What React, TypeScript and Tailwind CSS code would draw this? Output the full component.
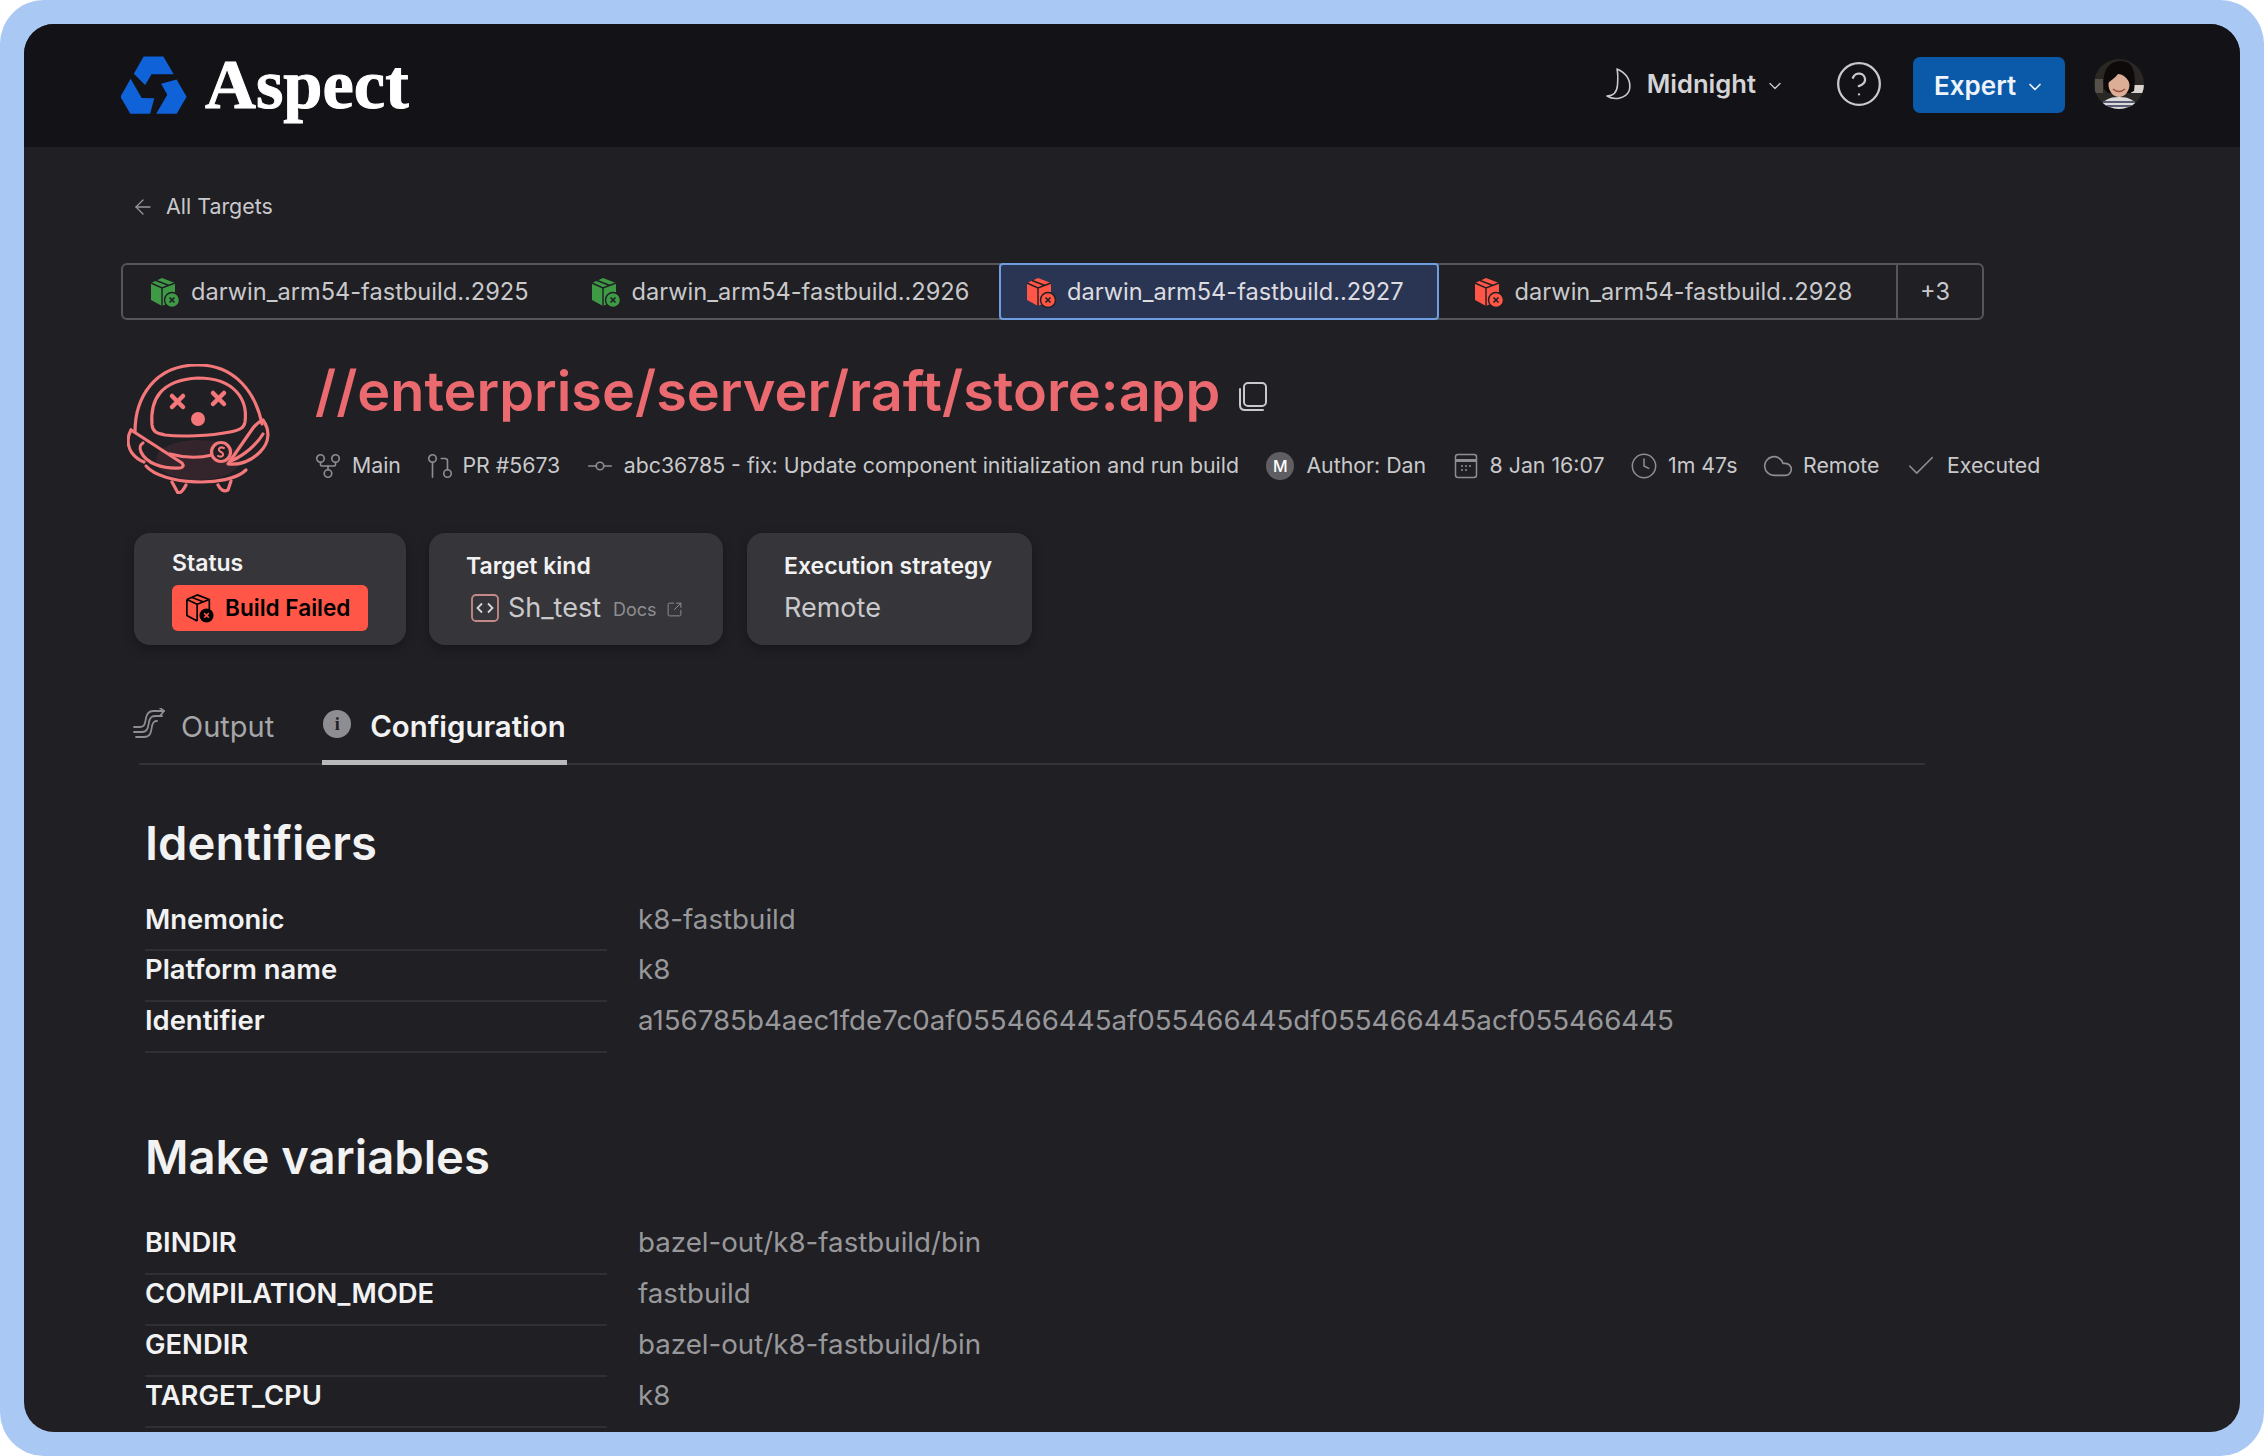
import { ArrowLeft, Check, ChevronDown, CircleHelp, Clock, Cloud, GitCommitHorizontal, GitFork, GitPullRequest, SquareArrowOutUpRight } from 'lucide-react';
import type { ReactNode } from 'react';

function Logo() {
  const piece = '23,0 43,0 53.5,18 31,18 24.5,29 13,17.5';
  return (
    <svg width="66" height="59" viewBox="0 0 67 59" fill="#0f62d8">
      <polygon points={piece} />
      <polygon points={piece} transform="rotate(120 33 33)" />
      <polygon points={piece} transform="rotate(240 33 33)" />
    </svg>
  );
}

function Moon() {
  return (
    <svg width="28" height="34" viewBox="0 0 28 34" fill="none" stroke="#c9c9cb" strokeWidth="1.6" strokeLinejoin="round">
      <path d="M12 2 C22 6 27 15 24 24 C21 31 10 34 2 29 C8 29 12 25 12.5 18 C13 11 13 6 12 2Z" />
    </svg>
  );
}

function Avatar() {
  return (
    <svg width="50" height="50" viewBox="0 0 50 50" className="rounded-full">
      <rect width="50" height="50" fill="#2a2724" />
      <rect x="37" y="26" width="13" height="8" fill="#d9d4ce" />
      <rect x="1" y="20" width="8" height="14" fill="#56504a" />
      <path d="M10 30 C7 8 18 2 27 2 C37 2 43 10 40 32 L36 34 H14Z" fill="#0d0a09" />
      <ellipse cx="25" cy="25" rx="10.5" ry="13" fill="#dcae95" />
      <path d="M14 24 C14 12 24 9 32 11 C37 14 37 20 36 26 C34 19 29 15 24 15 C21 19 17 21 14 24Z" fill="#0d0a09" />
      <path d="M19 30 Q25 35 31 30" stroke="#9a4f42" strokeWidth="1.6" fill="none" />
      <path d="M6 50 C8 41 15 38 25 38 C35 38 42 41 44 50Z" fill="#dcd9d9" />
      <path d="M9 43 H41 M7 47 H43" stroke="#565a74" strokeWidth="1.8" />
    </svg>
  );
}

function BoxIcon({ color }: { color: string }) {
  return (
    <svg width="31" height="32" viewBox="0 0 31 32" className="shrink-0">
      <polygon points="2,7 13,2 26,7 26,24 13,30 2,24" fill={color} />
      <path d="M2 7 L13 12 L26 7 M13 12 V30 M7 4.5 L20 9.5" stroke="#1f1f24" strokeWidth="1.4" fill="none" />
      <circle cx="23" cy="24" r="7.5" fill={color} stroke="#1f1f24" strokeWidth="1.4" />
      <path d="M20.5 21.5 L25.5 26.5 M25.5 21.5 L20.5 26.5" stroke="#1f1f24" strokeWidth="1.6" />
    </svg>
  );
}

function FailedBox() {
  return (
    <svg width="29" height="30" viewBox="0 0 31 32" className="shrink-0">
      <path d="M2 7 L13 2 L26 7 V18 M2 7 V24 L13 30 M2 7 L13 12 L26 7 M13 12 V30 M7 4.5 L20 9.5" stroke="#000" strokeWidth="1.8" fill="none" strokeLinejoin="round" />
      <circle cx="23" cy="24" r="7.5" fill="#000" />
      <path d="M20.5 21.5 L25.5 26.5 M25.5 21.5 L20.5 26.5" stroke="#ff5647" strokeWidth="1.6" />
    </svg>
  );
}

function Robot() {
  return (
    <svg width="143" height="130" viewBox="17 24 143 130" fill="none" stroke="#f4777a" strokeWidth="3.2" strokeLinecap="round" strokeLinejoin="round">
      <ellipse cx="88" cy="120" rx="42" ry="20" fill="#e8636b" fillOpacity="0.1" stroke="none" />
      <path d="M25 92 C25 58 44 25 88 25 C126 25 146 54 152 84" />
      <path d="M42 85 C40 60 50 40 88 38 C125 38 138 60 135 82 C134 88 130 90 120 92 C100 96 70 97 55 95 C46 93 43 92 42 85Z" />
      <path d="M62 56 L73 67 M73 56 L62 67 M103 53 L114 64 M114 53 L103 64" strokeWidth="4.5" />
      <circle cx="88" cy="79" r="7" fill="#f4777a" stroke="none" />
      <path d="M21 90 L72 123 Q75 127 70 128 C52 129 36 123 31 112 C29 107 30 105 33 103" />
      <path d="M21 90 C17 97 17 106 22 113 C25 117 29 120 34 122" />
      <path d="M153 80 C160 90 160 102 150 112 C140 122 128 125 118 124 L143 88 Q148 82 153 80Z" />
      <path d="M153 94 C147 104 135 115 121 121" />
      <path d="M36 126 C52 145 118 148 136 130" />
      <path d="M60 114 C75 118 90 118 102 115" />
      <circle cx="111" cy="112" r="9.5" fill="#1f1f24" />
      <path d="M114 108 C109 106 107 110 111 112 C115 114 113 118 108 116" strokeWidth="2" />
      <path d="M62 142 L68 153 Q72 153 76 145 M108 145 Q112 153 118 150 L121 141" />
    </svg>
  );
}

function OutputIcon() {
  return (
    <svg width="33" height="31" viewBox="0 0 33 31" fill="none" stroke="#8e8e92" strokeWidth="1.8" strokeLinecap="round" strokeLinejoin="round" className="mt-[7px]">
      <path d="M1 19 H7 C12 19 12 15 13 10 C14 5 16 3 20 3 H31" />
      <path d="M1 24 H9 C15 24 15 19 16 14 C17 9 19 8 23 8 H29" />
      <path d="M3 29 H11 C18 29 18 24 19 18 C20 14 21 13 24 13" />
      <path d="M27 0 L31 3 L27 8" />
    </svg>
  );
}

function CodeSquare() {
  return (
    <svg width="28" height="28" viewBox="0 0 28 28" fill="none" className="shrink-0">
      <rect x="1" y="1" width="26" height="26" rx="4" stroke="#c58a88" strokeWidth="1.8" />
      <path d="M11 9.5 L6.5 14 L11 18.5 M17 9.5 L21.5 14 L17 18.5" stroke="#d8d8da" strokeWidth="1.8" />
    </svg>
  );
}

function CopyIcon() {
  return (
    <svg width="30" height="31" viewBox="0 0 30 31" fill="none" stroke="#c9c9cb" strokeWidth="2" className="ml-[18px] mt-[10px]">
      <rect x="6" y="2" width="22" height="23" rx="4" />
      <path d="M2 8 V24 Q2 29 7 29 H25" strokeLinecap="round" />
    </svg>
  );
}

function CalendarIcon() {
  return (
    <svg width="24" height="26" viewBox="0 0 24 26" fill="none" stroke="#8e8e92" strokeWidth="1.5" className="shrink-0">
      <rect x="1.5" y="1.5" width="21" height="23" rx="2.5" />
      <path d="M1.5 7.5 H22.5" strokeWidth="3" />
      <path d="M7 13 H9 M11 13 H13 M15 13 H17 M7 17 H9 M11 17 H13" strokeWidth="1.6" />
    </svg>
  );
}

function TargetTab({ color, label, className }: { color: string; label: string; className: string }) {
  return (
    <div className={`flex items-center gap-[11px] ${className}`}>
      <BoxIcon color={color} />
      <span>{label}</span>
    </div>
  );
}

function Meta({ icon, label }: { icon: ReactNode; label: string }) {
  return (
    <div className="flex items-center gap-[12px]">
      {icon}
      <span>{label}</span>
    </div>
  );
}

function StatCard({ className, children }: { className: string; children: ReactNode }) {
  return <div className={`h-[112px] rounded-[16px] bg-[#36363a] shadow-[0_4px_12px_rgba(0,0,0,0.25)] ${className}`}>{children}</div>;
}

function Row({ label, value }: { label: string; value: string }) {
  return (
    <div className="flex h-[50.8px]">
      <div className="w-[462px] border-b-2 border-[#303034] text-[27.4px] leading-[36px] font-semibold text-[#f2f2f3]">{label}</div>
      <div className="pl-[31px] text-[27.7px] leading-[36px] text-[#98989b]">{value}</div>
    </div>
  );
}

const iconCls = 'text-[#8e8e92] shrink-0 -m-[3px]';

export default function App() {
  return (
    <div className="h-[1456px] w-[2264px] overflow-hidden bg-white font-['Inter',sans-serif]">
      <div className="h-full rounded-[44px] bg-[#a9c8f3] p-6">
        <div className="h-full overflow-hidden rounded-[30px] bg-[#1f1f24]">
          {/* Header */}
          <header className="flex h-[123px] items-center bg-[#131317] pl-[97px] pr-[96px]">
            <Logo />
            <span className="ml-[18px] -mt-[2px] font-['Liberation_Serif',serif] text-[70.5px] leading-none font-bold text-white [-webkit-text-stroke:1px_white]">Aspect</span>
            <div className="ml-auto -mt-[3px] flex items-center">
              <Moon />
              <span className="ml-[14px] text-[25.6px] font-semibold text-[#d4d4d6]">Midnight</span>
              <ChevronDown size={20} strokeWidth={1.6} className="ml-[9px] mt-[4px] text-[#c9c9cb]" />
              <CircleHelp size={50} strokeWidth={1.1} className="ml-[49px] -mt-[1px] text-[#c9c9cb]" />
              <button className="ml-[29px] mt-[2px] flex h-[56px] w-[152px] items-center rounded-[7px] bg-[#0b5aaa] pl-[21px] text-[26px] font-semibold text-[#eef3fa]">
                Expert
                <ChevronDown size={20} strokeWidth={2} className="ml-[9px] mt-[4px]" />
              </button>
              <div className="ml-[29px]">
                <Avatar />
              </div>
            </div>
          </header>

          <main className="pl-[97px]">
            <div className="mt-[44px] flex h-[30px] items-center pl-[10px] pt-[1px] text-[21.4px] text-[#c9c9cb]">
              <ArrowLeft size={24} strokeWidth={1.3} className="text-[#98989b]" />
              <span className="ml-[11px]">All Targets</span>
            </div>

            {/* Target tabs */}
            <div className="mt-[42px] flex h-[57px] w-[1863px] items-stretch rounded-[6px] border-2 border-[#55555a] text-[23.6px] text-[#c9c9cb]">
              <TargetTab color="#3f9a45" label="darwin_arm54-fastbuild..2925" className="w-[438px] pl-[26px]" />
              <TargetTab color="#3f9a45" label="darwin_arm54-fastbuild..2926" className="w-[439px] pl-[29px]" />
              <TargetTab color="#ff5647" label="darwin_arm54-fastbuild..2927" className="-my-[2px] w-[440px] rounded-[4px] border-2 border-[#6f9ee0] bg-[#2a3553] pl-[24px] text-[#dcdce0]" />
              <TargetTab color="#ff5647" label="darwin_arm54-fastbuild..2928" className="w-[458px] pl-[34px]" />
              <div className="flex w-[86px] items-center border-l-2 border-[#55555a] pl-[22px]">+3</div>
            </div>

            {/* Title */}
            <div className="mt-[44px] flex pl-[6px]">
              <Robot />
              <div className="ml-[45px]">
                <div className="-mt-[1px] flex h-[56px] items-center">
                  <h1 className="text-[55.8px] leading-none font-semibold text-[#ea6a70]">//enterprise/server/raft/store:app</h1>
                  <CopyIcon />
                </div>
                <div className="mt-[32px] flex h-[30px] items-center gap-[27.5px] pl-[1px] text-[21.3px] whitespace-nowrap text-[#c9c9cb]">
                  <Meta icon={<GitFork size={30} strokeWidth={1.3} className={iconCls} />} label="Main" />
                  <Meta icon={<GitPullRequest size={30} strokeWidth={1.3} className="-my-[3px] -ml-[3px] -mr-[5px] shrink-0 text-[#8e8e92]" />} label="PR #5673" />
                  <Meta icon={<GitCommitHorizontal size={30} strokeWidth={1.3} className={iconCls} />} label="abc36785 - fix: Update component initialization and run build" />
                  <Meta
                    icon={
                      <span className="flex h-[28px] w-[28px] items-center justify-center rounded-full bg-[#5f5f63] text-[16px] font-medium text-white">M</span>
                    }
                    label="Author: Dan"
                  />
                  <Meta icon={<CalendarIcon />} label="8 Jan 16:07" />
                  <Meta icon={<Clock size={28} strokeWidth={1.3} className="-m-[2px] shrink-0 text-[#8e8e92]" />} label="1m 47s" />
                  <Meta icon={<Cloud size={32} strokeWidth={1.2} className={iconCls} />} label="Remote" />
                  <Meta icon={<Check size={34} strokeWidth={1.1} className={iconCls} />} label="Executed" />
                </div>
              </div>
            </div>

            {/* Stat cards */}
            <div className="mt-[39px] flex pl-[13px]">
              <StatCard className="w-[272px] pl-[38px] pt-[15px]">
                <div className="text-[23px] leading-[30px] font-semibold text-[#f2f2f3]">Status</div>
                <div className="mt-[7px] flex h-[46px] w-[196px] items-center gap-[11px] rounded-[6px] bg-[#ff5647] pl-[13px] text-[22.6px] font-semibold text-black">
                  <FailedBox />
                  Build Failed
                </div>
              </StatCard>
              <StatCard className="ml-[23px] w-[294px] pl-[37px] pt-[18px]">
                <div className="text-[23px] leading-[30px] font-semibold text-[#f2f2f3]">Target kind</div>
                <div className="mt-[9px] flex items-center pl-[5px]">
                  <CodeSquare />
                  <span className="ml-[9px] text-[27px] leading-[36px] text-[#c9c9cb]">Sh_test</span>
                  <span className="ml-[12px] mt-[3px] text-[18px] text-[#8e8e92]">Docs</span>
                  <SquareArrowOutUpRight size={17} strokeWidth={1.4} className="ml-[9px] mt-[3px] text-[#8e8e92]" />
                </div>
              </StatCard>
              <StatCard className="ml-[24px] w-[285px] pl-[37px] pt-[18px]">
                <div className="text-[23px] leading-[30px] font-semibold text-[#f2f2f3]">Execution strategy</div>
                <div className="mt-[9px] text-[27px] leading-[36px] text-[#c9c9cb]">Remote</div>
              </StatCard>
            </div>

            {/* Page tabs */}
            <div className="relative mt-[56px] ml-[18px] flex h-[63.5px] w-[1786px] border-b-2 border-[#343438]">
              <div className="-ml-[6px] flex h-[63.5px] items-start gap-[15px]">
                <OutputIcon />
                <span className="pt-[8px] text-[29px] leading-[36px] text-[#a6a6a8]">Output</span>
              </div>
              <div className="ml-[48px] flex h-[63.5px] w-[245px] items-start gap-[19px] border-b-[5px] border-[#b9b9bc] pl-[1px]">
                <span className="mt-[9px] flex h-[28px] w-[28px] items-center justify-center rounded-full bg-[#8e8e92] font-['Liberation_Serif',serif] text-[18px] font-bold text-[#1f1f24]">i</span>
                <span className="pt-[8px] text-[29.4px] leading-[36px] font-semibold text-[#f2f2f3]">Configuration</span>
              </div>
            </div>

            {/* Identifiers */}
            <div className="ml-[24px]">
              <h2 className="mt-[48px] text-[47.2px] leading-[60px] font-semibold text-[#f2f2f3]">Identifiers</h2>
              <div className="mt-[28px]">
                <Row label="Mnemonic" value="k8-fastbuild" />
                <Row label="Platform name" value="k8" />
                <Row label="Identifier" value="a156785b4aec1fde7c0af055466445af055466445df055466445acf055466445" />
              </div>
              <h2 className="mt-[74.5px] text-[47.2px] leading-[60px] font-semibold text-[#f2f2f3]">Make variables</h2>
              <div className="mt-[37px]">
                <Row label="BINDIR" value="bazel-out/k8-fastbuild/bin" />
                <Row label="COMPILATION_MODE" value="fastbuild" />
                <Row label="GENDIR" value="bazel-out/k8-fastbuild/bin" />
                <Row label="TARGET_CPU" value="k8" />
              </div>
            </div>
          </main>
        </div>
      </div>
    </div>
  );
}
